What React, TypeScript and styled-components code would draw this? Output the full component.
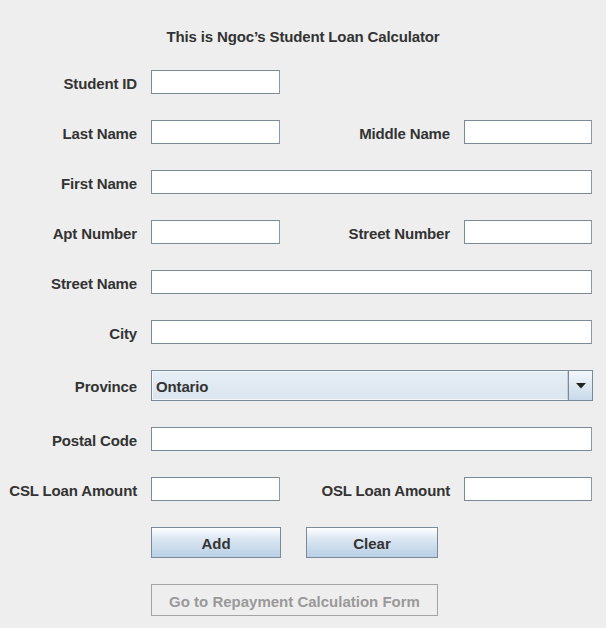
import styled, { createGlobalStyle } from "styled-components";

const Global = createGlobalStyle`
    html, body {
        margin: 0;
        padding: 0;
        background: #eeeeee;
    }
    * {
        box-sizing: border-box;
    }
`;

const Window = styled.div`
    width: 606px;
    height: 628px;
    background: #eeeeee;
    font-family: "Liberation Sans", Arial, sans-serif;
    font-weight: bold;
    font-size: 15px;
    letter-spacing: -0.15px;
    color: #333333;
    overflow: hidden;
`;

const Title = styled.div`
    padding-top: 28px;
    height: 46px;
    line-height: 18px;
    text-align: center;
    margin-bottom: 24px;
`;

const Form = styled.div`
    display: grid;
    grid-template-columns: 138px 129px 158px 128px;
    column-gap: 13px;
    row-gap: 26px;
    align-items: center;
`;

const Label = styled.label`
    text-align: right;
    white-space: nowrap;
    line-height: 18px;
    padding: 3px 1px 0 0;
`;

const Field = styled.input<{ $span?: boolean }>`
    grid-column: ${(p) => (p.$span ? "2 / 5" : "auto")};
    height: 24px;
    width: 100%;
    margin: 0;
    padding: 0 4px;
    border: 1px solid #7a8a99;
    border-right-color: #8d9aa6;
    background: #ffffff;
    font: inherit;
    outline: none;
`;

const Combo = styled.div`
    grid-column: 2 / 5;
    height: 31px;
    width: 442px;
    display: flex;
    border: 1px solid #7a8a99;
    background: linear-gradient(#e6eef6, #dbe5ef);
`;

const ComboText = styled.div`
    flex: 1;
    border: 1px solid #f4f7fa;
    border-right-color: #c3cfdb;
    padding: 2px 0 0 3px;
    line-height: 25px;
`;

const ComboButton = styled.div`
    width: 24px;
    border-left: 1px solid #7a8a99;
    display: flex;
    align-items: center;
    justify-content: center;
    background: linear-gradient(#f3f7fb, #c9d9e9);
`;

const Buttons = styled.div`
    grid-column: 2 / 5;
    display: flex;
    gap: 25px;
`;

const Button = styled.button<{ $w: number }>`
    width: ${(p) => p.$w}px;
    height: 31px;
    margin: 0;
    padding: 2px 0 0;
    border: 1px solid #7a8a99;
    background: linear-gradient(#ffffff 0%, #dde8f3 35%, #b8cfe5 100%);
    font: inherit;
    color: #333333;
`;

const LinkButton = styled.button`
    grid-column: 2 / 5;
    width: 287px;
    height: 32px;
    margin: 0;
    padding: 2px 0 0;
    border: 1px solid #a3a3a3;
    background: #eeeeee;
    font: inherit;
    color: #999999;
`;

export default function App() {
    return (
        <Window>
            <Global />
            <Title>This is Ngoc’s Student Loan Calculator</Title>
            <Form>
                <Label>Student ID</Label>
                <Field />
                <span />
                <span />

                <Label>Last Name</Label>
                <Field />
                <Label>Middle Name</Label>
                <Field />

                <Label>First Name</Label>
                <Field $span />

                <Label>Apt Number</Label>
                <Field />
                <Label>Street Number</Label>
                <Field />

                <Label>Street Name</Label>
                <Field $span />

                <Label>City</Label>
                <Field $span />

                <Label>Province</Label>
                <Combo>
                    <ComboText>Ontario</ComboText>
                    <ComboButton>
                        <svg width="10" height="6" viewBox="0 0 10 6">
                            <path d="M0 0h10L5 5.5z" fill="#222" />
                        </svg>
                    </ComboButton>
                </Combo>

                <Label>Postal Code</Label>
                <Field $span />

                <Label>CSL Loan Amount</Label>
                <Field />
                <Label>OSL Loan Amount</Label>
                <Field />

                <Buttons>
                    <Button $w={130}>Add</Button>
                    <Button $w={132}>Clear</Button>
                </Buttons>

                <LinkButton disabled>Go to Repayment Calculation Form</LinkButton>
            </Form>
        </Window>
    );
}
